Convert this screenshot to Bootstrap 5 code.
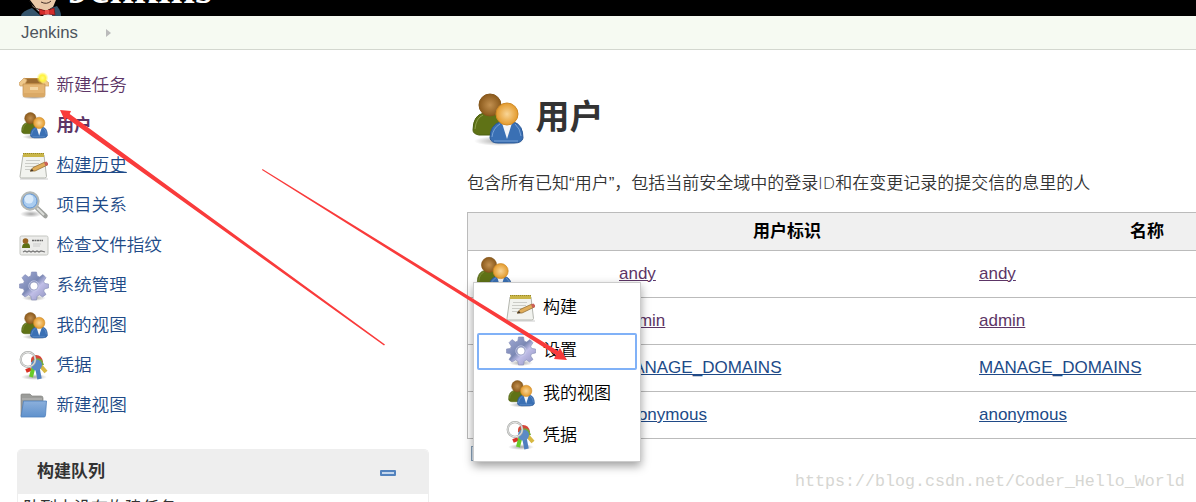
<!DOCTYPE html>
<html lang="zh-CN">
<head>
<meta charset="utf-8">
<title>用户 [Jenkins]</title>
<link href="https://cdn.jsdelivr.net/npm/bootstrap@5.3.0/dist/css/bootstrap.min.css" rel="stylesheet">
<style>
body{font-family:"Liberation Sans","Noto Sans CJK SC",sans-serif;font-size:17px;line-height:24px;color:#333;height:502px;overflow:hidden;background:#fff}
.topbar{height:16px;background:#000}
.topbar svg{display:block}
.crumbs{height:34px;background:#f6faf2;border-bottom:1px solid #d3d7cf;color:#4d545d;padding-left:21px}
.crumbs span{font-size:16.8px}
.caret{width:0;height:0;border-left:5px solid #bbb;border-top:4.5px solid transparent;border-bottom:4.5px solid transparent;margin-left:28px}
.layout{height:452px}
.side{width:429px;padding-top:15px}
.task{height:40px;padding-left:19px;gap:7.4px;font-size:17.6px;font-weight:350;color:#204a87;text-decoration:none}
.task svg,.menu-row svg{width:30px;height:30px;flex:none;position:relative;top:1px}
.seen{color:#5c3566}
.queue{margin:24px 0 0 17px;width:412px;border:1px solid #eee;border-bottom:0;border-radius:5px 5px 0 0;height:53px}
.queue-head{height:44px;background:#eee;padding:0 32px 0 19px;font-weight:700}
.queue-body{padding:3px 0 0 5px}
.minus{width:16px;height:6px;border:2px solid #5383be;background:#c4d6ec;border-radius:1px;position:relative;top:1px}
.main{padding:35px 0 0 38px;width:767px}
h1{font-size:34px;font-weight:700;margin:0;height:64px;gap:10.5px;color:#333}
.desc{margin:22px 0 16px;font-weight:350;white-space:nowrap}
.latin{font-family:"Open Sans","Noto Sans",sans-serif;font-weight:300;letter-spacing:.3px}
.people{border:1px solid #bbb;border-right:0}
.head-row{height:37px;background:#f0f0f0;font-weight:700;color:#000}
.person{height:47px;border-top:1px solid #bbb}
.c0{width:143px;padding-left:8px}
.c0 svg{display:block}
.c1{width:360px;padding-left:8px}
.c2{width:225px;padding-left:8px}
.head-row .c1{padding:0 8px 0 0}
.head-row .c2{padding:0 0 0 159px;text-align:left}
.person a{color:#204a87}
.person a.seen{color:#5c3566}
.menu-pop{position:absolute;left:473px;top:282px;width:168px;height:180px;padding:4px 3px;background:#fff;border:1px solid #ccc;box-shadow:0 4px 9px rgba(0,0,0,.38);color:#000}
.menu-row{height:42.7px;padding-left:29px;gap:7px;font-weight:350}
.menu-row.on{height:37px;margin:3px 0 2.7px;border:2px solid #80b1f7;border-radius:2px;padding-left:27px}
.menu-row svg{top:0}
.arrows{position:absolute;left:0;top:0;pointer-events:none}
.size-tab{position:absolute;left:471px;top:446px;width:6px;height:15px;border:1px solid #8ba4bd;background:#d9e6f3}
.watermark{position:absolute;left:795px;top:470px;font:16.66px/24px "Liberation Mono",monospace;color:#d6d6d2}
</style>
</head>
<body>
<svg width="0" height="0" class="position-absolute" aria-hidden="true">
<defs>
<radialGradient id="gb"><stop offset="0" stop-color="#c29050"/><stop offset="1" stop-color="#8b5a1c"/></radialGradient>
<radialGradient id="go"><stop offset="0" stop-color="#f9d596"/><stop offset="1" stop-color="#e39a2c"/></radialGradient>
<linearGradient id="gg" x2="1" y2="1"><stop stop-color="#a4add8"/><stop offset=".45" stop-color="#7b88b4"/><stop offset=".6" stop-color="#c1bfe8"/><stop offset="1" stop-color="#8b8fbc"/></linearGradient>
<linearGradient id="gl" x2="0" y2="1"><stop stop-color="#8cb0dc"/><stop offset="1" stop-color="#5f91cc"/></linearGradient>
<radialGradient id="gs"><stop stop-color="#000" stop-opacity=".35"/><stop offset="1" stop-color="#000" stop-opacity="0"/></radialGradient>
<radialGradient id="gy"><stop stop-color="#fffb80"/><stop offset=".5" stop-color="#fff23c"/><stop offset="1" stop-color="#fff34a" stop-opacity="0"/></radialGradient>
<g id="people-art">
<ellipse cx="28" cy="49" rx="25" ry="5" fill="url(#gs)"/>
<path d="M2 38Q2 23 13 21H27Q34 25 34 40Q33 43 25 43H8Q2 42 2 38Z" fill="#5f7216" stroke="#4c6010"/>
<path d="M4 37Q5 26 12 23" fill="none" stroke="#8a9c48"/>
<circle cx="19" cy="13" r="11" fill="url(#gb)" stroke="#85571c"/>
<path d="M19 46Q19 33 29 30H43Q52 33 52 46Q51 51 43 51H27Q20 51 19 46Z" fill="#3a70b4" stroke="#2a5896"/>
<path d="M31 31H41L36 47Z" fill="#f3f5f8"/>
<path d="M21 45Q22 36 29 32M50 44Q49 36 44 32M23 49H47" fill="none" stroke="#79a2d6"/>
<circle cx="36" cy="22" r="11" fill="url(#go)" stroke="#cf8a26"/>
</g>
<symbol id="i-people" viewBox="0 0 54 54"><use href="#people-art"/></symbol>
<symbol id="i-person-sm" viewBox="-3 -1 58 58"><use href="#people-art"/></symbol>
<symbol id="i-box" viewBox="0 0 30 30">
<ellipse cx="15" cy="26" rx="13" ry="2.500" fill="url(#gs)"/>
<path d="M5 7L23 7L26 13H3Z" fill="#b88440"/><path d="M7 8H22L24 12H5Z" fill="#9c6c32"/>
<path d="M5 7L0 12L1 15H5L8 9ZM24 7L30 12V15H25L21 9Z" fill="#efc88b" stroke="#cfa163" stroke-width=".7"/>
<path d="M4 13H26V24Q26 26 24 26H6Q4 26 4 24Z" fill="#e4b573" stroke="#c3914f" stroke-width=".7"/>
<path d="M11 16H19V19H11Z" fill="#f4d7a5"/><path d="M5 22H25V25H5Z" fill="#d3a25d" opacity=".6"/>
<circle cx="23.500" cy="7" r="6" fill="url(#gy)"/>
</symbol>
<symbol id="i-note" viewBox="0 0 30 30">
<path d="M1 28H29" stroke="#bbb" stroke-width="1.500" opacity=".5"/>
<path d="M4 4H25L27.500 25.500Q27.500 27 25.500 27H2.500Q1 27 1 25.500Z" fill="#f2f3ef" stroke="#b4b6af"/>
<path d="M4 2H25V6H4Z" fill="#c9b548"/><path d="M4 2.500H25" stroke="#97872c" stroke-dasharray="1 1"/>
<path d="M7 9.500H21M6 12.500H20M6 15.500H18M6 18.500H13" stroke="#cbccc7"/>
<path d="M11 20L14 16.500L26 11L28.500 14L16 20Z" fill="#e0ad5a" stroke="#947036" stroke-width=".8"/>
<path d="M25 11.500L27.500 10.500Q29.800 12 29 14L26.500 15Z" fill="#ca6158"/><path d="M11 20.500L13 17.700L14.500 20Z" fill="#43372b"/>
</symbol>
<symbol id="i-search" viewBox="0 0 30 30">
<ellipse cx="12" cy="23" rx="11" ry="3.500" fill="url(#gs)"/>
<path d="M18 17L26.500 25" stroke="#a0a29e" stroke-width="4.500" stroke-linecap="round"/><path d="M18 17L25 24" stroke="#dcdedb" stroke-width="2"/>
<circle cx="11" cy="10" r="8.500" fill="#a9ccf0" stroke="#b5b9b6" stroke-width="2.300"/>
<circle cx="11" cy="10" r="7" fill="none" stroke="#6294d0"/><circle cx="10" cy="8" r="4.500" fill="#d9eafa"/>
</symbol>
<symbol id="i-card" viewBox="0 0 30 30">
<rect x="1" y="5" width="28" height="19" rx="1.500" fill="#ececea" stroke="#c4c6c1"/>
<path d="M3 17Q3 12 7.500 12Q11 12 11 16V17H3Z" fill="#5c7014"/><circle cx="6.500" cy="10" r="2.800" fill="#976321"/>
<path d="M13 9.500H24" stroke="#666" stroke-width="1.300" stroke-dasharray="2 .5"/><path d="M14 13H22M14 15H21" stroke="#ccc"/>
<path d="M4 21L6 20L8 21L10 20L12 21L14 20L16 21L18 20L20 21L22 20L26 21" fill="none" stroke="#777" stroke-width="1.200"/>
</symbol>
<symbol id="i-gear" viewBox="0 0 30 30">
<ellipse cx="15" cy="27" rx="12" ry="3" fill="url(#gs)"/>
<path fill-rule="evenodd" d="M12.500 1H17.500L18.200 5L20.500 6L24 3.600L27 6.700L24.700 10.200L25.600 12.400L29.500 13V17L25.600 17.800L24.700 20L27 23.400L23.600 26L20.500 24L18.200 25L17.500 29H12.500L11.800 25L9.500 24L6 26L3 23.400L5.300 20L4.400 17.800L.5 17V13L4.400 12.400L5.300 10.200L3 6.700L6 3.600L9.500 6L11.800 5ZM15 11A4 4 0 1 0 15 19A4 4 0 1 0 15 11Z" fill="url(#gg)" stroke="#838bb5" stroke-width=".6"/>
<circle cx="15" cy="15" r="5.200" fill="none" stroke="#c7cae7" stroke-width=".8"/>
</symbol>
<symbol id="i-keys" viewBox="0 0 30 30">
<ellipse cx="15" cy="26" rx="13" ry="3" fill="url(#gs)"/>
<path d="M12 18L7 20" stroke="#d93124" stroke-width="4"/>
<path d="M20 13L27 21" stroke="#d7b842" stroke-width="4"/>
<path d="M15 14L12 26" stroke="#68ca28" stroke-width="4"/>
<path d="M12 11Q11 5 17 4Q23 4 24 11L19 15Z" fill="#d5473a"/><path d="M13 10Q18 5 23 9L25 14L17 15Z" fill="#72aa3b"/>
<path d="M18 15L20.500 28" stroke="#4f7fbf" stroke-width="4.500"/><circle cx="17.500" cy="14" r="5.500" fill="#5b8ac6"/>
<circle cx="9" cy="8.500" r="7.300" fill="none" stroke="#a9aba8" stroke-width="2.200"/><circle cx="9" cy="8.500" r="7.300" fill="none" stroke="#eee" stroke-width=".9"/>
</symbol>
<symbol id="i-folder" viewBox="0 0 30 30">
<path d="M2 4Q2 3 3 3H11L13 5H22Q24 5 24 7V25H2Z" fill="#9b9c99" stroke="#848583" stroke-width=".7"/><path d="M3 8H23" stroke="#bbb"/>
<path d="M4.500 10H27.500L26.500 24.500Q26.400 26 25 26H2Z" fill="url(#gl)" stroke="#4f80bd" stroke-width=".8"/>
</symbol>
</defs></svg>

<header class="topbar overflow-hidden">
<svg width="240" height="16">
<path d="M30 0H56L53 7L46 11L36 8Z" fill="#e9c8a8"/><path d="M29 0Q31 5 36 8L41 11L33 7Z" fill="#a98771"/>
<path d="M21 16Q22 11 32 8L41 16Z" fill="#34546b"/><path d="M51 8L57 6Q61 11 61 16H50Z" fill="#34546b"/>
<path d="M36 9L44 16H52L53 9L46 12Z" fill="#e8edef"/>
<path d="M39 9L46 11L54 8L55 15L48 14L40 15Z" fill="#d52c2b" stroke="#811817" stroke-width=".8"/><path d="M45 10H49V14H45Z" fill="#e94e49"/><path d="M41 2Q47 5 51 1" fill="none" stroke="#443028"/>
<text x="68" y="3" fill="#fff" font-family="Liberation Serif,serif" font-weight="700" font-size="42" textLength="144" lengthAdjust="spacingAndGlyphs">Jenkins</text>
</svg>
</header>
<nav class="crumbs d-flex align-items-center"><span>Jenkins</span><i class="caret"></i></nav>
<div class="layout d-flex overflow-hidden">
<aside class="side flex-shrink-0">
<a class="task seen d-flex align-items-center"><svg><use href="#i-box"/></svg><span>新建任务</span></a>
<a class="task seen d-flex align-items-center"><svg><use href="#i-person-sm"/></svg><span class="fw-bold">用户</span></a>
<a class="task d-flex align-items-center"><svg><use href="#i-note"/></svg><span class="text-decoration-underline">构建历史</span></a>
<a class="task d-flex align-items-center"><svg><use href="#i-search"/></svg><span>项目关系</span></a>
<a class="task d-flex align-items-center"><svg><use href="#i-card"/></svg><span>检查文件指纹</span></a>
<a class="task d-flex align-items-center"><svg><use href="#i-gear"/></svg><span>系统管理</span></a>
<a class="task d-flex align-items-center"><svg><use href="#i-person-sm"/></svg><span>我的视图</span></a>
<a class="task d-flex align-items-center"><svg><use href="#i-keys"/></svg><span>凭据</span></a>
<a class="task d-flex align-items-center"><svg><use href="#i-folder"/></svg><span>新建视图</span></a>
<section class="queue overflow-hidden">
<div class="queue-head d-flex align-items-center justify-content-between"><span>构建队列</span><i class="minus"></i></div>
<div class="queue-body">队列中没有构建任务</div>
</section>
</aside>
<main class="main flex-shrink-0">
<h1 class="d-flex align-items-center"><svg width="54" height="54" class="ms-1 mt-1"><use href="#i-people"/></svg><span>用户</span></h1>
<p class="desc">包含所有已知“用户”，包括当前安全域中的登录<span class="latin">ID</span>和在变更记录的提交信的息里的人</p>
<div class="people">
<div class="head-row d-flex align-items-center text-center"><div class="c0"></div><div class="c1">用户标识</div><div class="c2">名称</div></div>
<div class="person d-flex align-items-center"><div class="c0"><svg width="37" height="37"><use href="#i-people"/></svg></div><div class="c1"><a class="seen" href="#">andy</a></div><div class="c2"><a class="seen" href="#">andy</a></div></div>
<div class="person d-flex align-items-center"><div class="c0"></div><div class="c1"><a class="seen" href="#">admin</a></div><div class="c2"><a class="seen" href="#">admin</a></div></div>
<div class="person d-flex align-items-center"><div class="c0"></div><div class="c1"><a href="#">MANAGE_DOMAINS</a></div><div class="c2"><a href="#">MANAGE_DOMAINS</a></div></div>
<div class="person d-flex align-items-center"><div class="c0"></div><div class="c1"><a href="#">anonymous</a></div><div class="c2"><a href="#">anonymous</a></div></div>
</div>
</main>
</div>
<i class="size-tab"></i>
<div class="menu-pop">
<div class="menu-row d-flex align-items-center"><svg><use href="#i-note"/></svg><span>构建</span></div>
<div class="menu-row on d-flex align-items-center"><svg><use href="#i-gear"/></svg><span>设置</span></div>
<div class="menu-row d-flex align-items-center"><svg><use href="#i-person-sm"/></svg><span>我的视图</span></div>
<div class="menu-row d-flex align-items-center"><svg><use href="#i-keys"/></svg><span>凭据</span></div>
</div>
<div class="watermark">https://blog.csdn.net/Coder_Hello_World</div>
<svg class="arrows" width="1196" height="502"><g fill="#f93b3b"><path d="M60 110L71 111L69.700 114L385 344.500L384 345.500L66.500 118L65 121Z"/><path d="M262.500 169L558 351L560 348L567 360L554 359L556 355L262 170Z"/></g></svg>
<script src="https://cdn.jsdelivr.net/npm/bootstrap@5.3.0/dist/js/bootstrap.bundle.min.js"></script>
</body>
</html>
